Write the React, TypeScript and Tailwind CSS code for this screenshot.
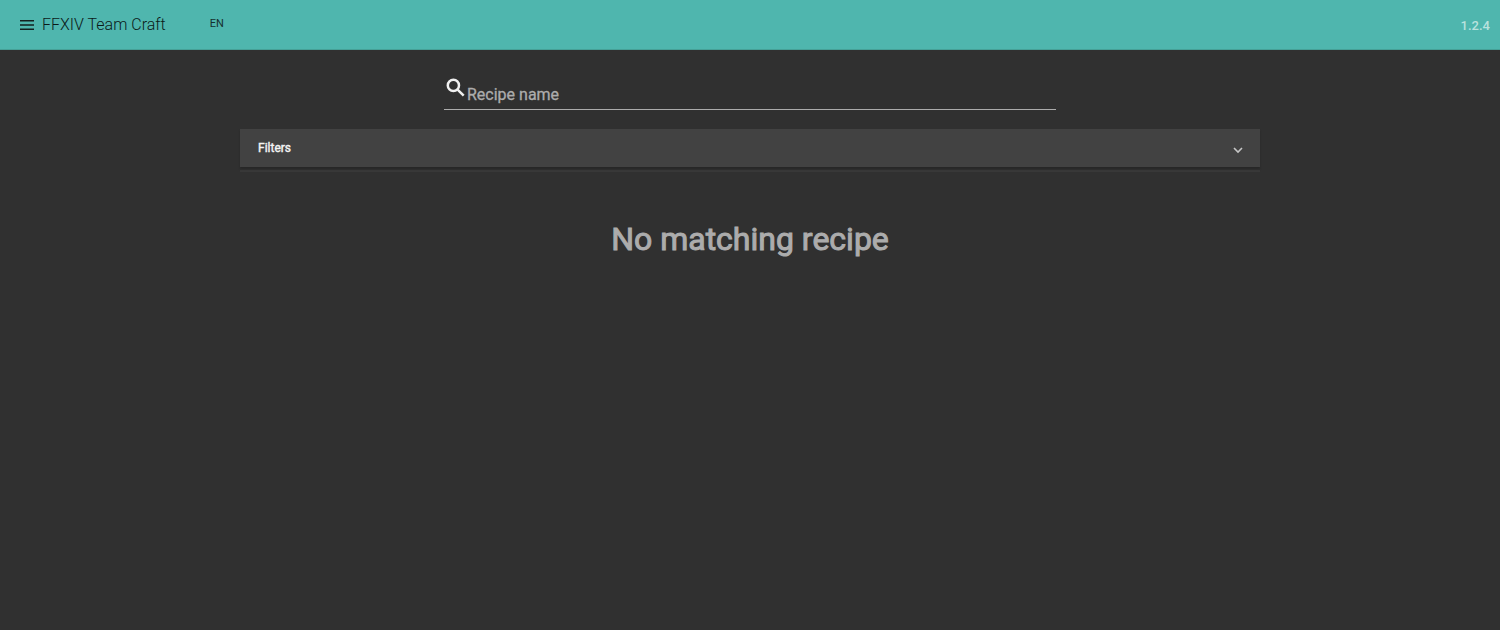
import { useState } from "react";

function Toolbar() {
  return (
    <header className="flex h-[50px] items-center border-b border-[#46a097] bg-[#4fb6ae] pr-2.5 pl-5 text-[#16302e]">
      <button type="button" aria-label="Menu" className="mr-2">
        <svg viewBox="0 0 14 10" className="h-2.5 w-3.5" fill="#14201f">
          <path d="M0 0h14v1.6H0zM0 4.2h14v1.6H0zM0 8.4h14V10H0z" />
        </svg>
      </button>
      <h1 className="text-base font-[350] text-[#0c1a19]">FFXIV Team Craft</h1>
      <button type="button" className="ml-11 text-[11px]">EN</button>
      <span className="ml-auto pt-0.5 text-[13px] font-medium text-[#b9e2de]">1.2.4</span>
    </header>
  );
}

function SearchIcon() {
  return (
    <svg viewBox="0 0 24 24" className="-mr-px size-6 shrink-0" fill="none" stroke="#f0f0f0" strokeWidth="2.5" aria-hidden="true">
      <circle cx="9.4" cy="9.4" r="5.6" />
      <path d="M13.6 13.6L19.7 19.7" />
    </svg>
  );
}

export default function App() {
  const [open, setOpen] = useState(false);
  return (
    <div className="min-h-screen bg-[#303030] font-[Roboto,sans-serif] text-white">
      <Toolbar />
      <main className="mx-auto flex w-[68%] flex-col pt-[26px]">
        <label className="mx-auto flex h-[34px] w-3/5 items-start border-b border-[#acacac]">
          <SearchIcon />
          <input
            type="text"
            aria-label="Recipe name"
            placeholder="Recipe name"
            className="mt-[7px] h-6 min-w-0 flex-1 bg-transparent text-base outline-none placeholder:text-[#acacac] [-webkit-text-stroke:0.3px]"
          />
        </label>
        <section className="mt-[19px] border-b-2 border-[#383838] pb-[3px]">
          <button
            type="button"
            aria-expanded={open}
            onClick={() => setOpen(!open)}
            className="flex h-[38px] w-full items-center justify-between bg-[#424242] px-[18px] text-xs font-normal text-[#f4f4f4] shadow-[0_2px_2px_rgba(0,0,0,0.2)] [-webkit-text-stroke:0.4px]"
          >
            Filters
            <svg viewBox="0 0 8 6" className="mt-1 h-1.5 w-2 overflow-visible" fill="none" stroke="#c6c6c6" strokeWidth="1.6">
              <path d="M0 1L4 5L8 1" />
            </svg>
          </button>
        </section>
        <h2 className="mt-[47px] text-center text-[32px] leading-10 font-normal text-[#acacac] [-webkit-text-stroke:1px]">No matching recipe</h2>
      </main>
    </div>
  );
}
